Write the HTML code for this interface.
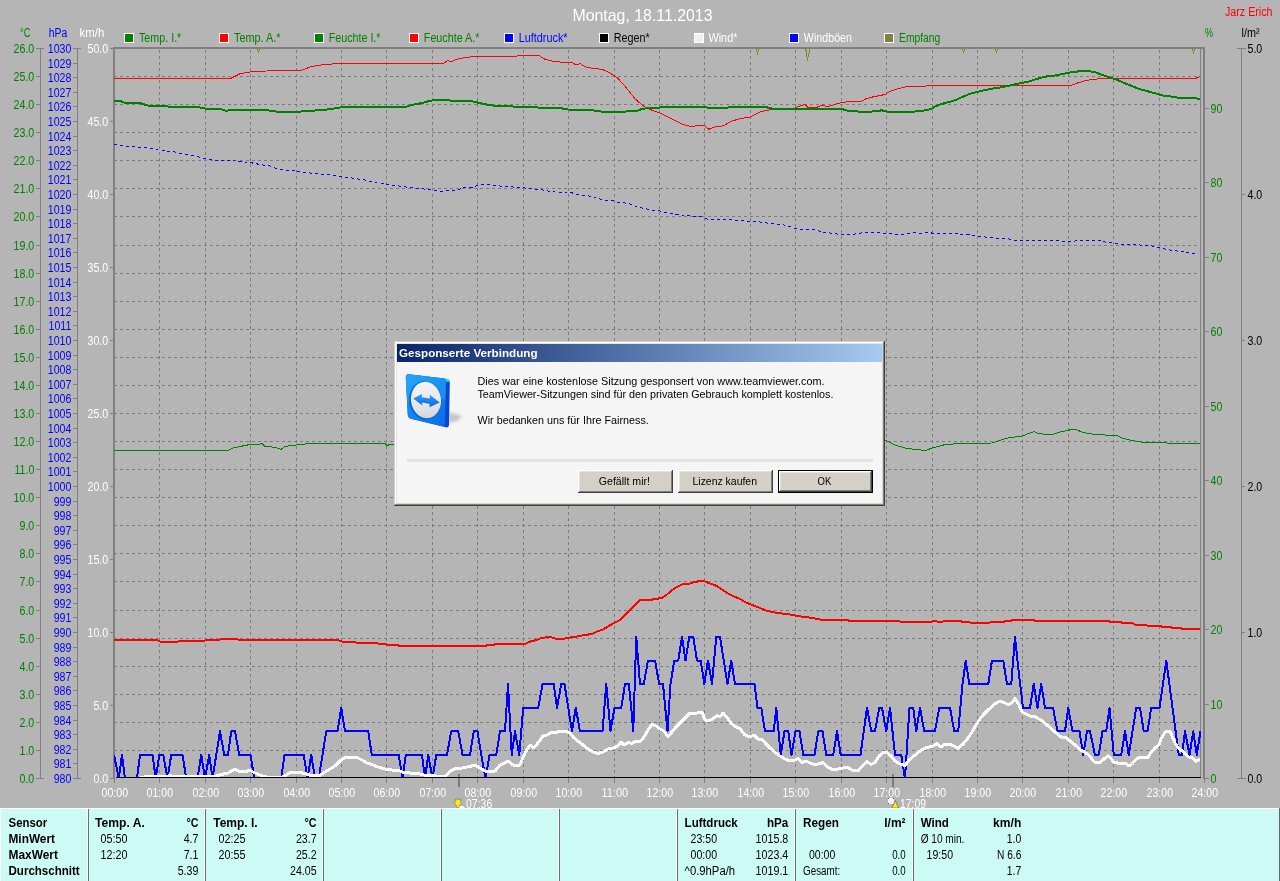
<!DOCTYPE html>
<html lang="de"><head><meta charset="utf-8"><title>Montag, 18.11.2013</title>
<style>
html,body{margin:0;padding:0;background:#b5b5b5;overflow:hidden}
svg{display:block;font-family:"Liberation Sans",sans-serif;will-change:transform}
</style></head><body>
<svg width="1280" height="881" viewBox="0 0 1280 881">
<defs><clipPath id="plotclip"><rect x="114" y="49" width="1087" height="728"/></clipPath></defs>
<rect x="0" y="0" width="1280" height="881" fill="#b5b5b5"/>
<text x="572.50" y="20.50" fill="#ffffff" font-size="16.5" textLength="140.00" lengthAdjust="spacingAndGlyphs">Montag, 18.11.2013</text>
<text x="1225.00" y="16.00" fill="#ff0000" font-size="12.5" textLength="47.50" lengthAdjust="spacingAndGlyphs">Jarz Erich</text>
<g shape-rendering="crispEdges">
<rect x="124" y="33" width="10" height="10" fill="#ffffff"/>
<rect x="125" y="34" width="8" height="8" fill="#008000"/>
<rect x="219" y="33" width="10" height="10" fill="#ffffff"/>
<rect x="220" y="34" width="8" height="8" fill="#ff0000"/>
<rect x="314" y="33" width="10" height="10" fill="#ffffff"/>
<rect x="315" y="34" width="8" height="8" fill="#008000"/>
<rect x="409" y="33" width="10" height="10" fill="#ffffff"/>
<rect x="410" y="34" width="8" height="8" fill="#ff0000"/>
<rect x="504" y="33" width="10" height="10" fill="#ffffff"/>
<rect x="505" y="34" width="8" height="8" fill="#0000ff"/>
<rect x="599" y="33" width="10" height="10" fill="#ffffff"/>
<rect x="600" y="34" width="8" height="8" fill="#000000"/>
<rect x="694" y="33" width="10" height="10" fill="#ffffff"/>
<rect x="695" y="34" width="8" height="8" fill="#f0f0f0"/>
<rect x="789" y="33" width="10" height="10" fill="#ffffff"/>
<rect x="790" y="34" width="8" height="8" fill="#0000ff"/>
<rect x="884" y="33" width="10" height="10" fill="#ffffff"/>
<rect x="885" y="34" width="8" height="8" fill="#808040"/>
</g>
<text x="139.00" y="42.00" fill="#008000" font-size="12.5" textLength="42.30" lengthAdjust="spacingAndGlyphs">Temp. I.*</text>
<text x="234.00" y="42.00" fill="#008000" font-size="12.5" textLength="46.50" lengthAdjust="spacingAndGlyphs">Temp. A.*</text>
<text x="328.80" y="42.00" fill="#008000" font-size="12.5" textLength="51.70" lengthAdjust="spacingAndGlyphs">Feuchte I.*</text>
<text x="423.80" y="42.00" fill="#008000" font-size="12.5" textLength="55.70" lengthAdjust="spacingAndGlyphs">Feuchte A.*</text>
<text x="518.80" y="42.00" fill="#0000ff" font-size="12.5" textLength="48.70" lengthAdjust="spacingAndGlyphs">Luftdruck*</text>
<text x="613.80" y="42.00" fill="#000000" font-size="12.5" textLength="35.90" lengthAdjust="spacingAndGlyphs">Regen*</text>
<text x="708.40" y="42.00" fill="#ffffff" font-size="12.5" textLength="29.10" lengthAdjust="spacingAndGlyphs">Wind*</text>
<text x="803.80" y="42.00" fill="#ffffff" font-size="12.5" textLength="48.20" lengthAdjust="spacingAndGlyphs">Windböen</text>
<text x="899.00" y="42.00" fill="#008000" font-size="12.5" textLength="41.30" lengthAdjust="spacingAndGlyphs">Empfang</text>
<g shape-rendering="crispEdges" fill="#808080">
<rect x="40" y="48" width="1" height="731" fill="#808080"/>
<rect x="36" y="778" width="8" height="1" fill="#808080"/>
<rect x="36" y="750" width="4" height="1" fill="#808080"/>
<rect x="36" y="722" width="4" height="1" fill="#808080"/>
<rect x="36" y="694" width="4" height="1" fill="#808080"/>
<rect x="36" y="666" width="4" height="1" fill="#808080"/>
<rect x="36" y="638" width="4" height="1" fill="#808080"/>
<rect x="36" y="610" width="4" height="1" fill="#808080"/>
<rect x="36" y="581" width="4" height="1" fill="#808080"/>
<rect x="36" y="553" width="4" height="1" fill="#808080"/>
<rect x="36" y="525" width="4" height="1" fill="#808080"/>
<rect x="36" y="497" width="4" height="1" fill="#808080"/>
<rect x="36" y="469" width="4" height="1" fill="#808080"/>
<rect x="36" y="441" width="4" height="1" fill="#808080"/>
<rect x="36" y="413" width="4" height="1" fill="#808080"/>
<rect x="36" y="385" width="4" height="1" fill="#808080"/>
<rect x="36" y="357" width="4" height="1" fill="#808080"/>
<rect x="36" y="329" width="4" height="1" fill="#808080"/>
<rect x="36" y="301" width="4" height="1" fill="#808080"/>
<rect x="36" y="273" width="4" height="1" fill="#808080"/>
<rect x="36" y="245" width="4" height="1" fill="#808080"/>
<rect x="36" y="216" width="4" height="1" fill="#808080"/>
<rect x="36" y="188" width="4" height="1" fill="#808080"/>
<rect x="36" y="160" width="4" height="1" fill="#808080"/>
<rect x="36" y="132" width="4" height="1" fill="#808080"/>
<rect x="36" y="104" width="4" height="1" fill="#808080"/>
<rect x="36" y="76" width="4" height="1" fill="#808080"/>
<rect x="36" y="48" width="8" height="1" fill="#808080"/>
<rect x="77" y="48" width="1" height="731" fill="#808080"/>
<rect x="73" y="778" width="8" height="1" fill="#808080"/>
<rect x="73" y="763" width="4" height="1" fill="#808080"/>
<rect x="73" y="749" width="4" height="1" fill="#808080"/>
<rect x="73" y="734" width="4" height="1" fill="#808080"/>
<rect x="73" y="720" width="4" height="1" fill="#808080"/>
<rect x="73" y="705" width="4" height="1" fill="#808080"/>
<rect x="73" y="690" width="4" height="1" fill="#808080"/>
<rect x="73" y="676" width="4" height="1" fill="#808080"/>
<rect x="73" y="661" width="4" height="1" fill="#808080"/>
<rect x="73" y="647" width="4" height="1" fill="#808080"/>
<rect x="73" y="632" width="4" height="1" fill="#808080"/>
<rect x="73" y="617" width="4" height="1" fill="#808080"/>
<rect x="73" y="603" width="4" height="1" fill="#808080"/>
<rect x="73" y="588" width="4" height="1" fill="#808080"/>
<rect x="73" y="574" width="4" height="1" fill="#808080"/>
<rect x="73" y="559" width="4" height="1" fill="#808080"/>
<rect x="73" y="544" width="4" height="1" fill="#808080"/>
<rect x="73" y="530" width="4" height="1" fill="#808080"/>
<rect x="73" y="515" width="4" height="1" fill="#808080"/>
<rect x="73" y="501" width="4" height="1" fill="#808080"/>
<rect x="73" y="486" width="4" height="1" fill="#808080"/>
<rect x="73" y="471" width="4" height="1" fill="#808080"/>
<rect x="73" y="457" width="4" height="1" fill="#808080"/>
<rect x="73" y="442" width="4" height="1" fill="#808080"/>
<rect x="73" y="428" width="4" height="1" fill="#808080"/>
<rect x="73" y="413" width="4" height="1" fill="#808080"/>
<rect x="73" y="398" width="4" height="1" fill="#808080"/>
<rect x="73" y="384" width="4" height="1" fill="#808080"/>
<rect x="73" y="369" width="4" height="1" fill="#808080"/>
<rect x="73" y="355" width="4" height="1" fill="#808080"/>
<rect x="73" y="340" width="4" height="1" fill="#808080"/>
<rect x="73" y="325" width="4" height="1" fill="#808080"/>
<rect x="73" y="311" width="4" height="1" fill="#808080"/>
<rect x="73" y="296" width="4" height="1" fill="#808080"/>
<rect x="73" y="282" width="4" height="1" fill="#808080"/>
<rect x="73" y="267" width="4" height="1" fill="#808080"/>
<rect x="73" y="252" width="4" height="1" fill="#808080"/>
<rect x="73" y="238" width="4" height="1" fill="#808080"/>
<rect x="73" y="223" width="4" height="1" fill="#808080"/>
<rect x="73" y="209" width="4" height="1" fill="#808080"/>
<rect x="73" y="194" width="4" height="1" fill="#808080"/>
<rect x="73" y="179" width="4" height="1" fill="#808080"/>
<rect x="73" y="165" width="4" height="1" fill="#808080"/>
<rect x="73" y="150" width="4" height="1" fill="#808080"/>
<rect x="73" y="136" width="4" height="1" fill="#808080"/>
<rect x="73" y="121" width="4" height="1" fill="#808080"/>
<rect x="73" y="106" width="4" height="1" fill="#808080"/>
<rect x="73" y="92" width="4" height="1" fill="#808080"/>
<rect x="73" y="77" width="4" height="1" fill="#808080"/>
<rect x="73" y="63" width="4" height="1" fill="#808080"/>
<rect x="73" y="48" width="8" height="1" fill="#808080"/>
<rect x="110" y="778" width="4" height="1" fill="#808080"/>
<rect x="110" y="705" width="4" height="1" fill="#808080"/>
<rect x="110" y="632" width="4" height="1" fill="#808080"/>
<rect x="110" y="559" width="4" height="1" fill="#808080"/>
<rect x="110" y="486" width="4" height="1" fill="#808080"/>
<rect x="110" y="413" width="4" height="1" fill="#808080"/>
<rect x="110" y="340" width="4" height="1" fill="#808080"/>
<rect x="110" y="267" width="4" height="1" fill="#808080"/>
<rect x="110" y="194" width="4" height="1" fill="#808080"/>
<rect x="110" y="121" width="4" height="1" fill="#808080"/>
<rect x="110" y="48" width="4" height="1" fill="#808080"/>
<rect x="1205" y="778" width="4" height="1" fill="#808080"/>
<rect x="1205" y="704" width="4" height="1" fill="#808080"/>
<rect x="1205" y="629" width="4" height="1" fill="#808080"/>
<rect x="1205" y="555" width="4" height="1" fill="#808080"/>
<rect x="1205" y="480" width="4" height="1" fill="#808080"/>
<rect x="1205" y="406" width="4" height="1" fill="#808080"/>
<rect x="1205" y="331" width="4" height="1" fill="#808080"/>
<rect x="1205" y="257" width="4" height="1" fill="#808080"/>
<rect x="1205" y="182" width="4" height="1" fill="#808080"/>
<rect x="1205" y="108" width="4" height="1" fill="#808080"/>
<rect x="1241" y="48" width="1" height="731" fill="#808080"/>
<rect x="1237" y="778" width="9" height="1" fill="#808080"/>
<rect x="1241" y="632" width="4" height="1" fill="#808080"/>
<rect x="1241" y="486" width="4" height="1" fill="#808080"/>
<rect x="1241" y="340" width="4" height="1" fill="#808080"/>
<rect x="1241" y="194" width="4" height="1" fill="#808080"/>
<rect x="1237" y="48" width="9" height="1" fill="#808080"/>
</g>
<text x="20.00" y="37.00" fill="#008000" font-size="12.5" textLength="10.50" lengthAdjust="spacingAndGlyphs">°C</text>
<text x="48.80" y="37.00" fill="#0000ff" font-size="12.5" textLength="18.50" lengthAdjust="spacingAndGlyphs">hPa</text>
<text x="79.50" y="37.00" fill="#ffffff" font-size="12.5" textLength="24.80" lengthAdjust="spacingAndGlyphs">km/h</text>
<text x="1205.00" y="37.00" fill="#008000" font-size="12.5" textLength="8.00" lengthAdjust="spacingAndGlyphs">%</text>
<text x="1241.50" y="37.00" fill="#000000" font-size="12.5" textLength="18.00" lengthAdjust="spacingAndGlyphs">l/m²</text>
<text x="19.53" y="783.00" fill="#008000" font-size="12.5" textLength="14.77" lengthAdjust="spacingAndGlyphs">0.0</text>
<text x="19.53" y="755.00" fill="#008000" font-size="12.5" textLength="14.77" lengthAdjust="spacingAndGlyphs">1.0</text>
<text x="19.53" y="727.00" fill="#008000" font-size="12.5" textLength="14.77" lengthAdjust="spacingAndGlyphs">2.0</text>
<text x="19.53" y="699.00" fill="#008000" font-size="12.5" textLength="14.77" lengthAdjust="spacingAndGlyphs">3.0</text>
<text x="19.53" y="671.00" fill="#008000" font-size="12.5" textLength="14.77" lengthAdjust="spacingAndGlyphs">4.0</text>
<text x="19.53" y="643.00" fill="#008000" font-size="12.5" textLength="14.77" lengthAdjust="spacingAndGlyphs">5.0</text>
<text x="19.53" y="615.00" fill="#008000" font-size="12.5" textLength="14.77" lengthAdjust="spacingAndGlyphs">6.0</text>
<text x="19.53" y="586.00" fill="#008000" font-size="12.5" textLength="14.77" lengthAdjust="spacingAndGlyphs">7.0</text>
<text x="19.53" y="558.00" fill="#008000" font-size="12.5" textLength="14.77" lengthAdjust="spacingAndGlyphs">8.0</text>
<text x="19.53" y="530.00" fill="#008000" font-size="12.5" textLength="14.77" lengthAdjust="spacingAndGlyphs">9.0</text>
<text x="13.62" y="502.00" fill="#008000" font-size="12.5" textLength="20.68" lengthAdjust="spacingAndGlyphs">10.0</text>
<text x="14.41" y="474.00" fill="#008000" font-size="12.5" textLength="19.89" lengthAdjust="spacingAndGlyphs">11.0</text>
<text x="13.62" y="446.00" fill="#008000" font-size="12.5" textLength="20.68" lengthAdjust="spacingAndGlyphs">12.0</text>
<text x="13.62" y="418.00" fill="#008000" font-size="12.5" textLength="20.68" lengthAdjust="spacingAndGlyphs">13.0</text>
<text x="13.62" y="390.00" fill="#008000" font-size="12.5" textLength="20.68" lengthAdjust="spacingAndGlyphs">14.0</text>
<text x="13.62" y="362.00" fill="#008000" font-size="12.5" textLength="20.68" lengthAdjust="spacingAndGlyphs">15.0</text>
<text x="13.62" y="334.00" fill="#008000" font-size="12.5" textLength="20.68" lengthAdjust="spacingAndGlyphs">16.0</text>
<text x="13.62" y="306.00" fill="#008000" font-size="12.5" textLength="20.68" lengthAdjust="spacingAndGlyphs">17.0</text>
<text x="13.62" y="278.00" fill="#008000" font-size="12.5" textLength="20.68" lengthAdjust="spacingAndGlyphs">18.0</text>
<text x="13.62" y="250.00" fill="#008000" font-size="12.5" textLength="20.68" lengthAdjust="spacingAndGlyphs">19.0</text>
<text x="13.62" y="221.00" fill="#008000" font-size="12.5" textLength="20.68" lengthAdjust="spacingAndGlyphs">20.0</text>
<text x="13.62" y="193.00" fill="#008000" font-size="12.5" textLength="20.68" lengthAdjust="spacingAndGlyphs">21.0</text>
<text x="13.62" y="165.00" fill="#008000" font-size="12.5" textLength="20.68" lengthAdjust="spacingAndGlyphs">22.0</text>
<text x="13.62" y="137.00" fill="#008000" font-size="12.5" textLength="20.68" lengthAdjust="spacingAndGlyphs">23.0</text>
<text x="13.62" y="109.00" fill="#008000" font-size="12.5" textLength="20.68" lengthAdjust="spacingAndGlyphs">24.0</text>
<text x="13.62" y="81.00" fill="#008000" font-size="12.5" textLength="20.68" lengthAdjust="spacingAndGlyphs">25.0</text>
<text x="13.62" y="53.00" fill="#008000" font-size="12.5" textLength="20.68" lengthAdjust="spacingAndGlyphs">26.0</text>
<text x="53.67" y="783.00" fill="#0000ff" font-size="12.5" textLength="17.73" lengthAdjust="spacingAndGlyphs">980</text>
<text x="53.67" y="768.00" fill="#0000ff" font-size="12.5" textLength="17.73" lengthAdjust="spacingAndGlyphs">981</text>
<text x="53.67" y="754.00" fill="#0000ff" font-size="12.5" textLength="17.73" lengthAdjust="spacingAndGlyphs">982</text>
<text x="53.67" y="739.00" fill="#0000ff" font-size="12.5" textLength="17.73" lengthAdjust="spacingAndGlyphs">983</text>
<text x="53.67" y="725.00" fill="#0000ff" font-size="12.5" textLength="17.73" lengthAdjust="spacingAndGlyphs">984</text>
<text x="53.67" y="710.00" fill="#0000ff" font-size="12.5" textLength="17.73" lengthAdjust="spacingAndGlyphs">985</text>
<text x="53.67" y="695.00" fill="#0000ff" font-size="12.5" textLength="17.73" lengthAdjust="spacingAndGlyphs">986</text>
<text x="53.67" y="681.00" fill="#0000ff" font-size="12.5" textLength="17.73" lengthAdjust="spacingAndGlyphs">987</text>
<text x="53.67" y="666.00" fill="#0000ff" font-size="12.5" textLength="17.73" lengthAdjust="spacingAndGlyphs">988</text>
<text x="53.67" y="652.00" fill="#0000ff" font-size="12.5" textLength="17.73" lengthAdjust="spacingAndGlyphs">989</text>
<text x="53.67" y="637.00" fill="#0000ff" font-size="12.5" textLength="17.73" lengthAdjust="spacingAndGlyphs">990</text>
<text x="53.67" y="622.00" fill="#0000ff" font-size="12.5" textLength="17.73" lengthAdjust="spacingAndGlyphs">991</text>
<text x="53.67" y="608.00" fill="#0000ff" font-size="12.5" textLength="17.73" lengthAdjust="spacingAndGlyphs">992</text>
<text x="53.67" y="593.00" fill="#0000ff" font-size="12.5" textLength="17.73" lengthAdjust="spacingAndGlyphs">993</text>
<text x="53.67" y="579.00" fill="#0000ff" font-size="12.5" textLength="17.73" lengthAdjust="spacingAndGlyphs">994</text>
<text x="53.67" y="564.00" fill="#0000ff" font-size="12.5" textLength="17.73" lengthAdjust="spacingAndGlyphs">995</text>
<text x="53.67" y="549.00" fill="#0000ff" font-size="12.5" textLength="17.73" lengthAdjust="spacingAndGlyphs">996</text>
<text x="53.67" y="535.00" fill="#0000ff" font-size="12.5" textLength="17.73" lengthAdjust="spacingAndGlyphs">997</text>
<text x="53.67" y="520.00" fill="#0000ff" font-size="12.5" textLength="17.73" lengthAdjust="spacingAndGlyphs">998</text>
<text x="53.67" y="506.00" fill="#0000ff" font-size="12.5" textLength="17.73" lengthAdjust="spacingAndGlyphs">999</text>
<text x="47.77" y="491.00" fill="#0000ff" font-size="12.5" textLength="23.63" lengthAdjust="spacingAndGlyphs">1000</text>
<text x="47.77" y="476.00" fill="#0000ff" font-size="12.5" textLength="23.63" lengthAdjust="spacingAndGlyphs">1001</text>
<text x="47.77" y="462.00" fill="#0000ff" font-size="12.5" textLength="23.63" lengthAdjust="spacingAndGlyphs">1002</text>
<text x="47.77" y="447.00" fill="#0000ff" font-size="12.5" textLength="23.63" lengthAdjust="spacingAndGlyphs">1003</text>
<text x="47.77" y="433.00" fill="#0000ff" font-size="12.5" textLength="23.63" lengthAdjust="spacingAndGlyphs">1004</text>
<text x="47.77" y="418.00" fill="#0000ff" font-size="12.5" textLength="23.63" lengthAdjust="spacingAndGlyphs">1005</text>
<text x="47.77" y="403.00" fill="#0000ff" font-size="12.5" textLength="23.63" lengthAdjust="spacingAndGlyphs">1006</text>
<text x="47.77" y="389.00" fill="#0000ff" font-size="12.5" textLength="23.63" lengthAdjust="spacingAndGlyphs">1007</text>
<text x="47.77" y="374.00" fill="#0000ff" font-size="12.5" textLength="23.63" lengthAdjust="spacingAndGlyphs">1008</text>
<text x="47.77" y="360.00" fill="#0000ff" font-size="12.5" textLength="23.63" lengthAdjust="spacingAndGlyphs">1009</text>
<text x="47.77" y="345.00" fill="#0000ff" font-size="12.5" textLength="23.63" lengthAdjust="spacingAndGlyphs">1010</text>
<text x="48.55" y="330.00" fill="#0000ff" font-size="12.5" textLength="22.85" lengthAdjust="spacingAndGlyphs">1011</text>
<text x="47.77" y="316.00" fill="#0000ff" font-size="12.5" textLength="23.63" lengthAdjust="spacingAndGlyphs">1012</text>
<text x="47.77" y="301.00" fill="#0000ff" font-size="12.5" textLength="23.63" lengthAdjust="spacingAndGlyphs">1013</text>
<text x="47.77" y="287.00" fill="#0000ff" font-size="12.5" textLength="23.63" lengthAdjust="spacingAndGlyphs">1014</text>
<text x="47.77" y="272.00" fill="#0000ff" font-size="12.5" textLength="23.63" lengthAdjust="spacingAndGlyphs">1015</text>
<text x="47.77" y="257.00" fill="#0000ff" font-size="12.5" textLength="23.63" lengthAdjust="spacingAndGlyphs">1016</text>
<text x="47.77" y="243.00" fill="#0000ff" font-size="12.5" textLength="23.63" lengthAdjust="spacingAndGlyphs">1017</text>
<text x="47.77" y="228.00" fill="#0000ff" font-size="12.5" textLength="23.63" lengthAdjust="spacingAndGlyphs">1018</text>
<text x="47.77" y="214.00" fill="#0000ff" font-size="12.5" textLength="23.63" lengthAdjust="spacingAndGlyphs">1019</text>
<text x="47.77" y="199.00" fill="#0000ff" font-size="12.5" textLength="23.63" lengthAdjust="spacingAndGlyphs">1020</text>
<text x="47.77" y="184.00" fill="#0000ff" font-size="12.5" textLength="23.63" lengthAdjust="spacingAndGlyphs">1021</text>
<text x="47.77" y="170.00" fill="#0000ff" font-size="12.5" textLength="23.63" lengthAdjust="spacingAndGlyphs">1022</text>
<text x="47.77" y="155.00" fill="#0000ff" font-size="12.5" textLength="23.63" lengthAdjust="spacingAndGlyphs">1023</text>
<text x="47.77" y="141.00" fill="#0000ff" font-size="12.5" textLength="23.63" lengthAdjust="spacingAndGlyphs">1024</text>
<text x="47.77" y="126.00" fill="#0000ff" font-size="12.5" textLength="23.63" lengthAdjust="spacingAndGlyphs">1025</text>
<text x="47.77" y="111.00" fill="#0000ff" font-size="12.5" textLength="23.63" lengthAdjust="spacingAndGlyphs">1026</text>
<text x="47.77" y="97.00" fill="#0000ff" font-size="12.5" textLength="23.63" lengthAdjust="spacingAndGlyphs">1027</text>
<text x="47.77" y="82.00" fill="#0000ff" font-size="12.5" textLength="23.63" lengthAdjust="spacingAndGlyphs">1028</text>
<text x="47.77" y="68.00" fill="#0000ff" font-size="12.5" textLength="23.63" lengthAdjust="spacingAndGlyphs">1029</text>
<text x="47.77" y="53.00" fill="#0000ff" font-size="12.5" textLength="23.63" lengthAdjust="spacingAndGlyphs">1030</text>
<text x="93.43" y="783.00" fill="#ffffff" font-size="12.5" textLength="14.77" lengthAdjust="spacingAndGlyphs">0.0</text>
<text x="93.43" y="710.00" fill="#ffffff" font-size="12.5" textLength="14.77" lengthAdjust="spacingAndGlyphs">5.0</text>
<text x="87.52" y="637.00" fill="#ffffff" font-size="12.5" textLength="20.68" lengthAdjust="spacingAndGlyphs">10.0</text>
<text x="87.52" y="564.00" fill="#ffffff" font-size="12.5" textLength="20.68" lengthAdjust="spacingAndGlyphs">15.0</text>
<text x="87.52" y="491.00" fill="#ffffff" font-size="12.5" textLength="20.68" lengthAdjust="spacingAndGlyphs">20.0</text>
<text x="87.52" y="418.00" fill="#ffffff" font-size="12.5" textLength="20.68" lengthAdjust="spacingAndGlyphs">25.0</text>
<text x="87.52" y="345.00" fill="#ffffff" font-size="12.5" textLength="20.68" lengthAdjust="spacingAndGlyphs">30.0</text>
<text x="87.52" y="272.00" fill="#ffffff" font-size="12.5" textLength="20.68" lengthAdjust="spacingAndGlyphs">35.0</text>
<text x="87.52" y="199.00" fill="#ffffff" font-size="12.5" textLength="20.68" lengthAdjust="spacingAndGlyphs">40.0</text>
<text x="87.52" y="126.00" fill="#ffffff" font-size="12.5" textLength="20.68" lengthAdjust="spacingAndGlyphs">45.0</text>
<text x="87.52" y="53.00" fill="#ffffff" font-size="12.5" textLength="20.68" lengthAdjust="spacingAndGlyphs">50.0</text>
<text x="1210.50" y="783.00" fill="#008000" font-size="12.5" textLength="5.91" lengthAdjust="spacingAndGlyphs">0</text>
<text x="1210.50" y="709.00" fill="#008000" font-size="12.5" textLength="11.82" lengthAdjust="spacingAndGlyphs">10</text>
<text x="1210.50" y="634.00" fill="#008000" font-size="12.5" textLength="11.82" lengthAdjust="spacingAndGlyphs">20</text>
<text x="1210.50" y="560.00" fill="#008000" font-size="12.5" textLength="11.82" lengthAdjust="spacingAndGlyphs">30</text>
<text x="1210.50" y="485.00" fill="#008000" font-size="12.5" textLength="11.82" lengthAdjust="spacingAndGlyphs">40</text>
<text x="1210.50" y="411.00" fill="#008000" font-size="12.5" textLength="11.82" lengthAdjust="spacingAndGlyphs">50</text>
<text x="1210.50" y="336.00" fill="#008000" font-size="12.5" textLength="11.82" lengthAdjust="spacingAndGlyphs">60</text>
<text x="1210.50" y="262.00" fill="#008000" font-size="12.5" textLength="11.82" lengthAdjust="spacingAndGlyphs">70</text>
<text x="1210.50" y="187.00" fill="#008000" font-size="12.5" textLength="11.82" lengthAdjust="spacingAndGlyphs">80</text>
<text x="1210.50" y="113.00" fill="#008000" font-size="12.5" textLength="11.82" lengthAdjust="spacingAndGlyphs">90</text>
<text x="1247.50" y="783.00" fill="#000000" font-size="12.5" textLength="14.77" lengthAdjust="spacingAndGlyphs">0.0</text>
<text x="1247.50" y="637.00" fill="#000000" font-size="12.5" textLength="14.77" lengthAdjust="spacingAndGlyphs">1.0</text>
<text x="1247.50" y="491.00" fill="#000000" font-size="12.5" textLength="14.77" lengthAdjust="spacingAndGlyphs">2.0</text>
<text x="1247.50" y="345.00" fill="#000000" font-size="12.5" textLength="14.77" lengthAdjust="spacingAndGlyphs">3.0</text>
<text x="1247.50" y="199.00" fill="#000000" font-size="12.5" textLength="14.77" lengthAdjust="spacingAndGlyphs">4.0</text>
<text x="1247.50" y="53.00" fill="#000000" font-size="12.5" textLength="14.77" lengthAdjust="spacingAndGlyphs">5.0</text>
<g shape-rendering="crispEdges" stroke="#7c7c7c" stroke-width="1" stroke-dasharray="3 3">
<line x1="159.5" y1="50" x2="159.5" y2="777" />
<line x1="205.5" y1="50" x2="205.5" y2="777" />
<line x1="250.5" y1="50" x2="250.5" y2="777" />
<line x1="296.5" y1="50" x2="296.5" y2="777" />
<line x1="341.5" y1="50" x2="341.5" y2="777" />
<line x1="386.5" y1="50" x2="386.5" y2="777" />
<line x1="432.5" y1="50" x2="432.5" y2="777" />
<line x1="477.5" y1="50" x2="477.5" y2="777" />
<line x1="523.5" y1="50" x2="523.5" y2="777" />
<line x1="568.5" y1="50" x2="568.5" y2="777" />
<line x1="614.5" y1="50" x2="614.5" y2="777" />
<line x1="659.5" y1="50" x2="659.5" y2="777" />
<line x1="704.5" y1="50" x2="704.5" y2="777" />
<line x1="750.5" y1="50" x2="750.5" y2="777" />
<line x1="795.5" y1="50" x2="795.5" y2="777" />
<line x1="841.5" y1="50" x2="841.5" y2="777" />
<line x1="886.5" y1="50" x2="886.5" y2="777" />
<line x1="932.5" y1="50" x2="932.5" y2="777" />
<line x1="977.5" y1="50" x2="977.5" y2="777" />
<line x1="1022.5" y1="50" x2="1022.5" y2="777" />
<line x1="1068.5" y1="50" x2="1068.5" y2="777" />
<line x1="1113.5" y1="50" x2="1113.5" y2="777" />
<line x1="1159.5" y1="50" x2="1159.5" y2="777" />
<line x1="114" y1="750.5" x2="1200" y2="750.5" />
<line x1="114" y1="722.5" x2="1200" y2="722.5" />
<line x1="114" y1="694.5" x2="1200" y2="694.5" />
<line x1="114" y1="666.5" x2="1200" y2="666.5" />
<line x1="114" y1="638.5" x2="1200" y2="638.5" />
<line x1="114" y1="610.5" x2="1200" y2="610.5" />
<line x1="114" y1="581.5" x2="1200" y2="581.5" />
<line x1="114" y1="553.5" x2="1200" y2="553.5" />
<line x1="114" y1="525.5" x2="1200" y2="525.5" />
<line x1="114" y1="497.5" x2="1200" y2="497.5" />
<line x1="114" y1="469.5" x2="1200" y2="469.5" />
<line x1="114" y1="441.5" x2="1200" y2="441.5" />
<line x1="114" y1="413.5" x2="1200" y2="413.5" />
<line x1="114" y1="385.5" x2="1200" y2="385.5" />
<line x1="114" y1="357.5" x2="1200" y2="357.5" />
<line x1="114" y1="329.5" x2="1200" y2="329.5" />
<line x1="114" y1="301.5" x2="1200" y2="301.5" />
<line x1="114" y1="273.5" x2="1200" y2="273.5" />
<line x1="114" y1="245.5" x2="1200" y2="245.5" />
<line x1="114" y1="216.5" x2="1200" y2="216.5" />
<line x1="114" y1="188.5" x2="1200" y2="188.5" />
<line x1="114" y1="160.5" x2="1200" y2="160.5" />
<line x1="114" y1="132.5" x2="1200" y2="132.5" />
<line x1="114" y1="104.5" x2="1200" y2="104.5" />
<line x1="114" y1="76.5" x2="1200" y2="76.5" />
</g>
<g shape-rendering="crispEdges">
<rect x="114" y="778" width="1" height="5" fill="#808080"/>
<rect x="159" y="778" width="1" height="5" fill="#808080"/>
<rect x="205" y="778" width="1" height="5" fill="#808080"/>
<rect x="250" y="778" width="1" height="5" fill="#808080"/>
<rect x="296" y="778" width="1" height="5" fill="#808080"/>
<rect x="341" y="778" width="1" height="5" fill="#808080"/>
<rect x="386" y="778" width="1" height="5" fill="#808080"/>
<rect x="432" y="778" width="1" height="5" fill="#808080"/>
<rect x="477" y="778" width="1" height="5" fill="#808080"/>
<rect x="523" y="778" width="1" height="5" fill="#808080"/>
<rect x="568" y="778" width="1" height="5" fill="#808080"/>
<rect x="614" y="778" width="1" height="5" fill="#808080"/>
<rect x="659" y="778" width="1" height="5" fill="#808080"/>
<rect x="704" y="778" width="1" height="5" fill="#808080"/>
<rect x="750" y="778" width="1" height="5" fill="#808080"/>
<rect x="795" y="778" width="1" height="5" fill="#808080"/>
<rect x="841" y="778" width="1" height="5" fill="#808080"/>
<rect x="886" y="778" width="1" height="5" fill="#808080"/>
<rect x="932" y="778" width="1" height="5" fill="#808080"/>
<rect x="977" y="778" width="1" height="5" fill="#808080"/>
<rect x="1022" y="778" width="1" height="5" fill="#808080"/>
<rect x="1068" y="778" width="1" height="5" fill="#808080"/>
<rect x="1113" y="778" width="1" height="5" fill="#808080"/>
<rect x="1159" y="778" width="1" height="5" fill="#808080"/>
<rect x="1204" y="778" width="1" height="5" fill="#808080"/>
</g>
<g shape-rendering="crispEdges" stroke-linejoin="round">
<rect x="113" y="47" width="1092" height="2" fill="#808080"/>
<rect x="113" y="47" width="2" height="732" fill="#808080"/>
<rect x="1203" y="47" width="2" height="732" fill="#808080"/>
<rect x="1200" y="49" width="1" height="729" fill="#808080"/>
<rect x="257" y="48" width="1" height="3" fill="#86822c"/>
<rect x="260" y="48" width="1" height="1" fill="#86822c"/>
<rect x="259" y="49" width="1" height="2" fill="#86822c"/>
<rect x="258" y="51" width="1" height="2" fill="#86822c"/>
<rect x="756" y="48" width="1" height="3" fill="#86822c"/>
<rect x="759" y="48" width="1" height="1" fill="#86822c"/>
<rect x="758" y="49" width="1" height="2" fill="#86822c"/>
<rect x="757" y="51" width="1" height="4" fill="#86822c"/>
<rect x="962" y="48" width="1" height="3" fill="#86822c"/>
<rect x="965" y="48" width="1" height="1" fill="#86822c"/>
<rect x="964" y="49" width="1" height="2" fill="#86822c"/>
<rect x="963" y="51" width="1" height="2" fill="#86822c"/>
<rect x="995" y="48" width="1" height="3" fill="#86822c"/>
<rect x="998" y="48" width="1" height="1" fill="#86822c"/>
<rect x="997" y="49" width="1" height="2" fill="#86822c"/>
<rect x="996" y="51" width="1" height="2" fill="#86822c"/>
<rect x="1192" y="48" width="1" height="3" fill="#86822c"/>
<rect x="1195" y="48" width="1" height="1" fill="#86822c"/>
<rect x="1194" y="49" width="1" height="2" fill="#86822c"/>
<rect x="1193" y="51" width="1" height="3" fill="#86822c"/>
<rect x="805" y="48" width="1" height="3" fill="#86822c"/>
<rect x="806" y="50" width="1" height="7" fill="#86822c"/>
<rect x="809" y="48" width="1" height="5" fill="#86822c"/>
<rect x="808" y="53" width="1" height="4" fill="#86822c"/>
<rect x="807" y="57" width="1" height="4" fill="#86822c"/>
<polyline points="114.00,144.50 125.00,146.00 150.00,148.00 160.00,150.50 175.00,152.00 182.00,154.00 195.00,156.00 205.00,158.50 215.00,160.00 225.00,160.00 240.00,161.50 250.00,162.50 260.00,164.50 270.00,166.00 275.00,168.00 285.00,170.00 295.00,171.00 305.00,172.50 315.00,173.50 330.00,175.00 342.00,176.50 355.00,178.50 365.00,180.00 372.00,182.00 380.00,183.50 395.00,185.50 410.00,187.50 420.00,188.75 432.00,189.50 440.00,191.50 450.00,190.50 457.00,190.00 463.00,188.00 470.00,187.50 475.00,186.50 480.00,184.50 487.00,184.50 495.00,185.50 505.00,186.50 520.00,187.50 530.00,188.50 540.00,189.50 548.00,191.00 555.00,192.00 565.00,193.00 570.00,192.00 575.00,194.00 585.00,195.50 592.00,196.50 597.00,198.50 605.00,200.00 612.00,200.50 617.00,202.00 625.00,203.00 632.00,204.50 637.00,207.00 645.00,208.50 652.00,210.00 660.00,211.00 667.00,213.00 675.00,214.00 685.00,215.50 695.00,216.50 703.00,217.00 707.00,219.00 720.00,219.50 732.00,220.00 745.00,221.00 760.00,222.00 770.00,223.50 782.00,224.50 790.00,226.50 795.00,228.50 800.00,229.50 815.00,229.50 820.00,231.50 830.00,233.00 840.00,234.50 850.00,235.00 857.00,233.50 865.00,232.50 880.00,233.00 890.00,233.50 900.00,234.50 910.00,233.50 915.00,232.50 920.00,233.50 930.00,232.50 933.00,233.50 955.00,233.50 965.00,234.50 975.00,235.50 985.00,237.00 995.00,238.00 1008.00,238.50 1013.00,240.50 1040.00,240.50 1060.00,241.00 1068.00,242.00 1075.00,241.00 1085.00,240.50 1100.00,240.00 1105.00,242.00 1115.00,243.50 1125.00,244.50 1140.00,245.00 1150.00,245.50 1155.00,247.00 1162.00,248.50 1170.00,250.00 1180.00,251.50 1187.00,252.50 1197.00,253.50" fill="none" stroke="#0000ff" stroke-width="1" stroke-dasharray="3 3"/>
<polyline points="114.00,78.25 231.00,78.25 240.00,73.75 250.00,72.00 257.50,71.25 285.00,70.50 302.50,70.00 310.00,67.00 317.50,65.50 325.00,64.50 340.00,63.50 443.75,63.25 447.50,60.50 451.00,62.00 456.00,59.50 465.00,57.50 477.50,56.25 516.00,56.25 520.00,55.25 538.75,55.25 543.75,58.75 550.00,60.75 560.00,62.00 572.50,62.50 576.00,65.00 580.00,63.50 585.00,66.75 592.50,68.25 602.50,69.50 610.00,73.00 617.50,78.00 625.00,86.25 635.00,98.75 642.50,105.50 650.00,109.50 660.00,113.00 670.00,118.00 682.50,124.25 692.50,127.00 696.00,125.50 703.75,125.00 708.75,129.25 715.00,127.00 723.75,125.75 731.00,121.25 740.00,118.75 750.00,117.00 760.00,112.00 771.00,109.50 795.00,108.00 801.00,105.50 805.00,104.50 807.50,107.00 817.50,107.00 822.50,105.00 826.00,106.50 830.00,106.00 834.00,104.50 842.50,102.50 850.00,101.50 862.50,101.00 866.00,98.75 872.50,97.00 885.00,94.50 890.00,91.25 897.50,88.75 905.00,87.00 915.00,86.50 937.50,85.50 1071.00,85.50 1077.50,83.00 1085.00,80.75 1092.50,79.50 1105.00,78.25 1196.00,78.25 1200.00,76.50" fill="none" stroke="#ff0000" stroke-width="1" />
<polyline points="114.00,101.25 121.00,101.25 125.00,103.00 140.00,103.00 147.50,105.50 167.50,106.50 197.50,107.00 205.00,108.50 220.00,109.00 226.00,110.75 232.50,110.00 265.00,110.00 277.50,111.75 297.50,111.75 315.00,110.50 330.00,109.25 340.00,107.50 355.00,107.00 405.00,107.00 414.00,104.50 422.50,103.00 430.00,100.75 437.50,100.00 445.00,100.00 452.50,100.75 470.00,100.75 477.50,102.50 485.00,104.25 492.50,105.50 510.00,106.00 515.00,106.75 535.00,107.00 542.50,108.25 562.50,108.50 567.50,109.50 590.00,109.75 595.00,110.75 602.50,111.75 625.00,111.75 628.75,110.75 637.50,110.75 642.50,108.75 650.00,108.00 660.00,107.50 665.00,107.00 703.75,107.00 712.50,108.25 722.50,108.25 732.50,107.00 765.00,106.75 770.00,108.25 775.00,109.00 842.50,109.25 847.50,110.75 855.00,111.00 860.00,111.75 870.00,111.75 875.00,111.00 880.00,110.75 881.75,110.00 883.75,111.25 890.00,111.75 912.50,111.75 920.00,111.00 927.50,110.00 932.50,108.25 936.00,106.00 942.50,103.75 950.00,101.75 957.50,99.25 960.00,98.00 970.00,93.75 980.00,91.25 990.00,89.00 1000.00,87.50 1010.00,85.50 1020.00,83.25 1030.00,81.25 1040.00,78.00 1047.50,76.25 1055.00,75.50 1062.50,74.00 1070.00,72.50 1077.50,71.50 1082.50,71.00 1090.00,71.25 1096.00,72.50 1102.50,75.00 1110.00,77.50 1117.50,80.00 1125.00,83.25 1132.50,86.25 1140.00,89.25 1147.50,91.25 1155.00,93.25 1162.50,95.50 1172.50,96.75 1180.00,98.00 1195.00,98.25 1200.00,99.00" fill="none" stroke="#008000" stroke-width="2" />
<polyline points="114.00,450.50 228.00,450.50 233.00,448.00 240.00,446.50 250.00,444.50 260.00,444.00 262.00,443.50 265.00,446.50 272.00,447.00 277.00,448.00 281.00,449.50 285.00,446.50 292.00,445.50 300.00,444.50 310.00,443.50 385.00,443.50 387.00,445.50 390.00,444.50 396.00,444.50 420.00,444.50 500.00,444.00 600.00,443.00 700.00,441.00 800.00,440.00 870.00,439.00 884.00,439.50 895.00,445.00 905.00,448.00 915.00,449.50 926.00,450.50 932.00,448.00 945.00,444.60 960.00,443.50 992.00,443.00 1000.00,440.50 1005.00,438.50 1015.00,437.00 1022.00,436.00 1030.00,433.00 1034.00,431.50 1038.00,433.50 1047.00,434.50 1053.00,434.50 1058.00,432.50 1067.00,430.50 1072.00,429.50 1076.00,429.50 1082.00,432.00 1088.00,433.50 1095.00,434.50 1105.00,435.00 1117.00,435.50 1122.00,438.00 1128.00,439.50 1135.00,441.00 1143.00,442.30 1165.00,442.50 1167.00,443.00 1200.00,443.00" fill="none" stroke="#008000" stroke-width="1" />
<polyline points="114.00,640.00 157.00,640.00 160.00,641.50 178.00,641.50 181.00,640.50 205.00,640.50 210.00,639.50 220.00,639.50 223.00,638.50 235.00,638.50 238.00,639.50 247.00,639.50 250.00,640.00 337.00,640.00 342.00,641.50 352.00,641.50 356.00,642.50 375.00,642.50 378.00,643.50 385.00,643.50 388.00,645.00 397.00,645.00 400.00,646.00 485.00,646.00 488.00,645.00 493.00,645.00 496.00,644.00 525.00,644.00 528.00,642.50 532.00,641.00 537.00,640.00 540.00,638.50 545.00,637.50 550.00,637.00 555.00,638.50 560.00,639.00 565.00,638.50 570.00,637.50 577.00,636.50 585.00,635.00 592.00,634.00 597.00,631.50 603.00,629.50 608.00,626.50 613.00,623.50 620.00,620.00 625.00,615.00 630.00,610.00 635.00,605.00 640.00,600.00 650.00,600.00 655.00,599.00 662.00,598.00 667.00,594.50 672.00,590.00 677.00,587.00 682.00,584.50 690.00,583.50 695.00,582.00 700.00,581.00 705.00,581.50 710.00,583.50 717.00,586.00 722.00,589.50 727.00,593.00 733.00,596.00 740.00,599.00 745.00,602.00 752.00,605.00 760.00,608.00 767.00,611.00 775.00,612.50 782.00,613.50 790.00,614.50 797.00,616.00 805.00,617.00 813.00,618.00 820.00,619.50 828.00,620.00 847.00,620.00 850.00,621.00 895.00,621.00 900.00,621.50 932.00,621.50 934.00,620.50 937.00,621.50 943.00,621.50 946.00,621.00 960.00,621.00 963.00,622.00 967.00,622.00 970.00,622.50 990.00,622.50 993.00,622.00 1003.00,622.00 1006.00,621.00 1010.00,621.00 1013.00,620.00 1033.00,620.00 1036.00,621.00 1108.00,621.00 1111.00,622.00 1120.00,622.00 1123.00,623.00 1132.00,623.00 1135.00,624.50 1145.00,624.50 1148.00,626.00 1160.00,626.00 1163.00,627.00 1170.00,627.00 1173.00,628.00 1180.00,628.00 1183.00,629.00 1200.00,629.00" fill="none" stroke="#ff0000" stroke-width="2" />
<polyline points="114.00,754.90 118.75,778.50 122.00,754.90 125.00,778.50 137.00,778.50 140.00,754.90 152.50,754.90 155.75,778.50 159.25,754.90 163.25,754.90 167.50,778.50 171.25,754.90 182.50,754.90 186.25,778.50 197.50,778.50 201.25,754.90 205.00,778.50 209.25,754.90 212.50,778.50 216.25,754.90 220.00,731.30 224.25,754.90 228.00,754.90 231.25,731.30 235.00,731.30 239.25,754.90 250.50,754.90 254.25,778.50 281.25,778.50 284.50,754.90 303.75,754.90 307.50,778.50 311.25,754.90 315.00,778.50 318.75,778.50 322.50,754.90 326.25,731.30 337.50,731.30 341.25,707.70 345.00,731.30 368.25,731.30 371.75,754.90 398.75,754.90 402.50,778.50 405.75,754.90 422.00,754.90 425.00,778.50 428.25,754.90 432.50,778.50 436.25,754.90 447.00,754.90 451.25,731.30 458.25,731.30 462.50,754.90 470.00,754.90 473.75,731.30 477.50,731.30 481.25,754.90 485.50,778.50 489.50,754.90 496.25,754.90 500.00,731.30 505.00,731.30 508.00,684.10 511.75,754.90 515.00,731.30 519.25,754.90 523.25,707.70 538.25,707.70 542.50,684.10 553.75,684.10 557.00,707.70 561.25,684.10 564.50,684.10 568.25,707.70 572.00,731.30 575.75,707.70 580.00,731.30 602.50,731.30 606.25,684.10 610.50,731.30 614.50,707.70 621.25,707.70 625.00,684.10 628.75,684.10 631.25,707.70 633.25,731.30 636.25,636.90 640.00,684.10 643.75,684.10 648.00,660.50 655.00,660.50 659.25,684.10 663.00,684.10 667.50,731.30 670.50,684.10 674.25,660.50 678.25,660.50 682.00,636.90 685.50,660.50 689.25,636.90 693.25,636.90 697.00,660.50 700.75,660.50 704.25,684.10 708.00,660.50 712.00,684.10 716.25,636.90 720.00,636.90 723.75,660.50 727.50,684.10 731.25,660.50 735.00,684.10 754.50,684.10 757.50,707.70 761.25,707.70 765.00,731.30 773.75,731.30 776.25,707.70 780.75,754.90 784.50,731.30 788.25,731.30 791.50,754.90 795.50,731.30 799.50,731.30 803.25,754.90 814.50,754.90 818.25,731.30 822.50,731.30 826.25,754.90 833.25,754.90 837.00,731.30 840.75,754.90 860.50,754.90 863.75,731.30 867.00,707.70 871.25,731.30 875.00,731.30 879.25,707.70 882.00,707.70 886.25,731.30 890.00,707.70 895.00,754.90 901.25,754.90 905.00,778.50 909.50,707.70 913.25,707.70 916.25,731.30 920.00,707.70 924.25,731.30 935.00,731.30 939.25,707.70 950.00,707.70 954.25,731.30 958.25,731.30 962.50,684.10 965.75,660.50 969.25,684.10 988.25,684.10 992.00,660.50 1003.25,660.50 1007.00,684.10 1011.25,684.10 1015.00,636.90 1018.75,672.30 1023.00,707.70 1030.00,707.70 1033.75,684.10 1037.50,707.70 1041.25,684.10 1045.00,707.70 1053.00,707.70 1057.50,731.30 1065.00,731.30 1068.25,707.70 1072.50,731.30 1079.50,731.30 1083.25,754.90 1087.00,731.30 1090.00,731.30 1095.00,754.90 1098.75,754.90 1102.50,731.30 1106.25,731.30 1109.50,707.70 1113.75,754.90 1121.25,754.90 1125.00,731.30 1128.75,754.90 1136.25,707.70 1140.00,707.70 1143.75,731.30 1147.50,731.30 1151.25,707.70 1159.50,707.70 1166.25,660.50 1178.75,754.90 1182.00,754.90 1185.00,731.30 1189.50,754.90 1193.25,731.30 1196.75,754.90 1200.50,731.30" fill="none" stroke="#0000ff" stroke-width="2" clip-path="url(#plotclip)"/>
<polyline points="115.00,779.50 138.00,779.50 142.00,777.30 150.00,776.30 160.00,776.80 170.00,775.80 180.00,776.80 190.00,776.30 200.00,776.80 210.00,776.80 215.00,776.30 220.00,774.80 228.00,773.00 235.00,769.00 240.00,772.00 245.00,771.50 250.00,770.50 255.00,773.00 262.00,775.80 270.00,777.80 280.00,777.80 285.00,775.80 290.00,772.50 297.00,772.00 305.00,773.50 312.00,775.80 320.00,775.30 325.00,772.00 330.00,769.00 335.00,766.00 340.00,761.00 345.00,757.50 350.00,757.50 357.00,757.50 362.00,760.00 367.00,763.00 372.00,764.50 378.00,767.00 385.00,769.00 392.00,770.00 398.00,770.00 402.00,772.00 410.00,773.00 418.00,773.50 425.00,775.30 430.00,775.80 445.00,776.30 450.00,771.50 455.00,768.50 462.00,768.00 470.00,766.50 475.00,765.00 480.00,768.00 485.00,771.00 490.00,772.00 495.00,771.00 500.00,765.00 504.00,763.50 508.00,761.00 512.00,764.50 516.00,766.00 520.00,765.00 525.00,753.00 530.00,745.00 534.00,748.00 538.00,743.00 543.00,736.00 547.00,735.00 551.00,732.50 555.00,733.00 559.00,731.50 565.00,731.00 570.00,733.00 574.00,738.00 578.00,741.00 583.00,745.00 588.00,749.00 593.00,752.00 598.00,753.50 603.00,752.00 608.00,749.00 613.00,748.00 618.00,746.00 621.00,742.00 624.00,745.00 628.00,742.50 632.00,743.50 636.00,741.00 640.00,742.00 644.00,737.00 648.00,730.00 652.00,724.50 656.00,726.00 660.00,729.00 664.00,731.00 668.00,737.00 672.00,732.00 676.00,727.00 680.00,723.00 685.00,718.00 690.00,713.00 695.00,713.50 699.00,712.50 702.00,712.00 705.00,720.00 710.00,720.50 714.00,718.00 717.00,715.50 720.00,717.00 723.00,713.00 727.00,717.50 731.00,723.00 735.00,726.50 740.00,728.50 745.00,735.00 750.00,737.00 754.00,735.00 758.00,739.00 762.00,739.50 766.00,744.00 770.00,748.00 775.00,752.50 780.00,756.00 785.00,759.00 790.00,761.00 795.00,760.00 798.00,758.50 802.00,762.50 806.00,761.00 810.00,763.00 815.00,765.00 820.00,763.50 823.00,762.50 827.00,766.50 832.00,769.50 838.00,769.00 843.00,768.00 847.00,767.00 852.00,770.00 858.00,771.00 862.00,766.50 867.00,761.50 871.00,764.50 875.00,762.50 879.00,756.00 883.00,752.50 887.00,752.50 891.00,756.00 895.00,761.00 900.00,764.00 905.00,765.50 909.00,760.00 914.00,756.00 919.00,752.00 924.00,748.50 929.00,747.00 933.00,746.00 937.00,743.50 941.00,747.00 945.00,744.00 950.00,744.50 954.00,746.00 958.00,748.50 963.00,744.00 968.00,738.00 972.00,732.00 976.00,725.00 980.00,719.00 984.00,714.00 988.00,710.00 992.00,706.50 996.00,703.00 1000.00,701.00 1004.00,702.50 1008.00,704.50 1012.00,703.00 1015.00,698.50 1019.00,705.00 1022.00,712.00 1027.00,714.50 1031.00,716.50 1035.00,716.50 1039.00,719.00 1043.00,721.50 1047.00,725.00 1050.00,727.50 1055.00,732.00 1059.00,735.50 1062.50,737.50 1066.00,737.50 1070.00,741.00 1075.00,745.00 1080.00,749.50 1085.00,752.50 1089.00,755.00 1092.50,760.00 1096.00,763.00 1100.00,762.50 1104.00,759.00 1107.50,756.00 1110.00,757.00 1114.00,762.50 1117.50,763.00 1121.00,764.00 1125.00,763.00 1129.00,766.00 1132.50,763.50 1136.00,759.50 1140.00,757.00 1144.00,757.50 1147.50,758.00 1151.00,752.50 1155.00,748.00 1159.00,745.00 1161.00,739.00 1164.00,734.00 1166.00,731.50 1170.00,731.50 1172.50,737.00 1175.00,743.00 1179.00,749.00 1182.50,751.00 1185.00,754.00 1189.00,757.00 1192.50,758.00 1196.00,761.50 1200.00,759.00" fill="none" stroke="#fafafa" stroke-width="3" clip-path="url(#plotclip)"/>
<rect x="458" y="774" width="2" height="13" fill="#7a7a7a"/>
<rect x="892" y="774" width="2" height="13" fill="#7a7a7a"/>
<rect x="116" y="777" width="1085" height="1" fill="#000000"/>
</g>
<text x="101.55" y="797.00" fill="#ffffff" font-size="12.5" textLength="26.50" lengthAdjust="spacingAndGlyphs">00:00</text>
<text x="146.55" y="797.00" fill="#ffffff" font-size="12.5" textLength="26.50" lengthAdjust="spacingAndGlyphs">01:00</text>
<text x="192.55" y="797.00" fill="#ffffff" font-size="12.5" textLength="26.50" lengthAdjust="spacingAndGlyphs">02:00</text>
<text x="237.55" y="797.00" fill="#ffffff" font-size="12.5" textLength="26.50" lengthAdjust="spacingAndGlyphs">03:00</text>
<text x="283.55" y="797.00" fill="#ffffff" font-size="12.5" textLength="26.50" lengthAdjust="spacingAndGlyphs">04:00</text>
<text x="328.55" y="797.00" fill="#ffffff" font-size="12.5" textLength="26.50" lengthAdjust="spacingAndGlyphs">05:00</text>
<text x="373.55" y="797.00" fill="#ffffff" font-size="12.5" textLength="26.50" lengthAdjust="spacingAndGlyphs">06:00</text>
<text x="419.55" y="797.00" fill="#ffffff" font-size="12.5" textLength="26.50" lengthAdjust="spacingAndGlyphs">07:00</text>
<text x="464.55" y="797.00" fill="#ffffff" font-size="12.5" textLength="26.50" lengthAdjust="spacingAndGlyphs">08:00</text>
<text x="510.55" y="797.00" fill="#ffffff" font-size="12.5" textLength="26.50" lengthAdjust="spacingAndGlyphs">09:00</text>
<text x="555.55" y="797.00" fill="#ffffff" font-size="12.5" textLength="26.50" lengthAdjust="spacingAndGlyphs">10:00</text>
<text x="601.55" y="797.00" fill="#ffffff" font-size="12.5" textLength="26.50" lengthAdjust="spacingAndGlyphs">11:00</text>
<text x="646.55" y="797.00" fill="#ffffff" font-size="12.5" textLength="26.50" lengthAdjust="spacingAndGlyphs">12:00</text>
<text x="691.55" y="797.00" fill="#ffffff" font-size="12.5" textLength="26.50" lengthAdjust="spacingAndGlyphs">13:00</text>
<text x="737.55" y="797.00" fill="#ffffff" font-size="12.5" textLength="26.50" lengthAdjust="spacingAndGlyphs">14:00</text>
<text x="782.55" y="797.00" fill="#ffffff" font-size="12.5" textLength="26.50" lengthAdjust="spacingAndGlyphs">15:00</text>
<text x="828.55" y="797.00" fill="#ffffff" font-size="12.5" textLength="26.50" lengthAdjust="spacingAndGlyphs">16:00</text>
<text x="873.55" y="797.00" fill="#ffffff" font-size="12.5" textLength="26.50" lengthAdjust="spacingAndGlyphs">17:00</text>
<text x="919.55" y="797.00" fill="#ffffff" font-size="12.5" textLength="26.50" lengthAdjust="spacingAndGlyphs">18:00</text>
<text x="964.55" y="797.00" fill="#ffffff" font-size="12.5" textLength="26.50" lengthAdjust="spacingAndGlyphs">19:00</text>
<text x="1009.55" y="797.00" fill="#ffffff" font-size="12.5" textLength="26.50" lengthAdjust="spacingAndGlyphs">20:00</text>
<text x="1055.55" y="797.00" fill="#ffffff" font-size="12.5" textLength="26.50" lengthAdjust="spacingAndGlyphs">21:00</text>
<text x="1100.55" y="797.00" fill="#ffffff" font-size="12.5" textLength="26.50" lengthAdjust="spacingAndGlyphs">22:00</text>
<text x="1146.55" y="797.00" fill="#ffffff" font-size="12.5" textLength="26.50" lengthAdjust="spacingAndGlyphs">23:00</text>
<text x="1191.55" y="797.00" fill="#ffffff" font-size="12.5" textLength="26.50" lengthAdjust="spacingAndGlyphs">24:00</text>
<text x="466.00" y="808.00" fill="#ffffff" font-size="12.5" textLength="26.20" lengthAdjust="spacingAndGlyphs">07:36</text>
<text x="900.00" y="808.00" fill="#ffffff" font-size="12.5" textLength="26.00" lengthAdjust="spacingAndGlyphs">17:09</text>
<path d="M457.5 798 l1.5 2 l2 -1 l-0.5 2.5 l1 1.5 l-1.5 1.5 l-1 3 l-2 0 l-1 -3 l-2 -1.5 l1.5 -1.5 l-0.5 -2.5 l1.5 1 z" fill="#ffee00" stroke="#3a3a8a" stroke-width="0.4"/>
<path d="M458.5 808 q3 -4.5 6.5 0 z" fill="#ffffff"/>
<g shape-rendering="crispEdges"><rect x="888" y="798" width="6" height="6" fill="#f8f8f8"/><rect x="888" y="798" width="1" height="1" fill="#4858b0"/><rect x="893" y="798" width="1" height="1" fill="#4858b0"/><rect x="888" y="803" width="1" height="1" fill="#4858b0"/></g>
<path d="M892 808 l3.3 -7.5 l3.2 7.5 z" fill="#ffee00" stroke="#404040" stroke-width="0.5"/>
<g shape-rendering="crispEdges">
<rect x="0" y="808" width="1280" height="73" fill="#ccfbf6"/>
<rect x="0" y="808" width="1280" height="1" fill="#ffffff"/>
<rect x="0" y="808" width="1" height="73" fill="#ffffff"/>
<rect x="1279" y="808" width="1" height="73" fill="#686868"/>
<rect x="87" y="809" width="1" height="72" fill="#f4ffff"/>
<rect x="88" y="809" width="1" height="72" fill="#6e6e6e"/>
<rect x="204" y="809" width="1" height="72" fill="#f4ffff"/>
<rect x="205" y="809" width="1" height="72" fill="#6e6e6e"/>
<rect x="322" y="809" width="1" height="72" fill="#f4ffff"/>
<rect x="323" y="809" width="1" height="72" fill="#6e6e6e"/>
<rect x="440" y="809" width="1" height="72" fill="#f4ffff"/>
<rect x="441" y="809" width="1" height="72" fill="#6e6e6e"/>
<rect x="558" y="809" width="1" height="72" fill="#f4ffff"/>
<rect x="559" y="809" width="1" height="72" fill="#6e6e6e"/>
<rect x="676" y="809" width="1" height="72" fill="#f4ffff"/>
<rect x="677" y="809" width="1" height="72" fill="#6e6e6e"/>
<rect x="794" y="809" width="1" height="72" fill="#f4ffff"/>
<rect x="795" y="809" width="1" height="72" fill="#6e6e6e"/>
<rect x="912" y="809" width="1" height="72" fill="#f4ffff"/>
<rect x="913" y="809" width="1" height="72" fill="#6e6e6e"/>
</g>
<text x="8.50" y="827.00" fill="#000000" font-size="12.5" font-weight="bold" textLength="38.80" lengthAdjust="spacingAndGlyphs">Sensor</text>
<text x="8.50" y="843.00" fill="#000000" font-size="12.5" font-weight="bold" textLength="46.50" lengthAdjust="spacingAndGlyphs">MinWert</text>
<text x="8.50" y="859.00" fill="#000000" font-size="12.5" font-weight="bold" textLength="49.40" lengthAdjust="spacingAndGlyphs">MaxWert</text>
<text x="8.50" y="875.00" fill="#000000" font-size="12.5" font-weight="bold" textLength="71.20" lengthAdjust="spacingAndGlyphs">Durchschnitt</text>
<text x="95.00" y="827.00" fill="#000000" font-size="12.5" font-weight="bold" textLength="49.80" lengthAdjust="spacingAndGlyphs">Temp. A.</text>
<text x="186.40" y="827.00" fill="#000000" font-size="12.5" font-weight="bold" textLength="12.00" lengthAdjust="spacingAndGlyphs">°C</text>
<text x="100.60" y="843.00" fill="#000000" font-size="12.5" textLength="26.80" lengthAdjust="spacingAndGlyphs">05:50</text>
<text x="183.63" y="843.00" fill="#000000" font-size="12.5" textLength="14.77" lengthAdjust="spacingAndGlyphs">4.7</text>
<text x="100.60" y="859.00" fill="#000000" font-size="12.5" textLength="26.80" lengthAdjust="spacingAndGlyphs">12:20</text>
<text x="183.63" y="859.00" fill="#000000" font-size="12.5" textLength="14.77" lengthAdjust="spacingAndGlyphs">7.1</text>
<text x="177.72" y="875.00" fill="#000000" font-size="12.5" textLength="20.68" lengthAdjust="spacingAndGlyphs">5.39</text>
<text x="213.30" y="827.00" fill="#000000" font-size="12.5" font-weight="bold" textLength="44.30" lengthAdjust="spacingAndGlyphs">Temp. I.</text>
<text x="304.60" y="827.00" fill="#000000" font-size="12.5" font-weight="bold" textLength="12.00" lengthAdjust="spacingAndGlyphs">°C</text>
<text x="218.60" y="843.00" fill="#000000" font-size="12.5" textLength="26.80" lengthAdjust="spacingAndGlyphs">02:25</text>
<text x="295.92" y="843.00" fill="#000000" font-size="12.5" textLength="20.68" lengthAdjust="spacingAndGlyphs">23.7</text>
<text x="218.60" y="859.00" fill="#000000" font-size="12.5" textLength="26.80" lengthAdjust="spacingAndGlyphs">20:55</text>
<text x="295.92" y="859.00" fill="#000000" font-size="12.5" textLength="20.68" lengthAdjust="spacingAndGlyphs">25.2</text>
<text x="290.01" y="875.00" fill="#000000" font-size="12.5" textLength="26.59" lengthAdjust="spacingAndGlyphs">24.05</text>
<text x="684.60" y="827.00" fill="#000000" font-size="12.5" font-weight="bold" textLength="53.20" lengthAdjust="spacingAndGlyphs">Luftdruck</text>
<text x="766.90" y="827.00" fill="#000000" font-size="12.5" font-weight="bold" textLength="21.40" lengthAdjust="spacingAndGlyphs">hPa</text>
<text x="690.60" y="843.00" fill="#000000" font-size="12.5" textLength="26.50" lengthAdjust="spacingAndGlyphs">23:50</text>
<text x="755.60" y="843.00" fill="#000000" font-size="12.5" textLength="32.70" lengthAdjust="spacingAndGlyphs">1015.8</text>
<text x="690.60" y="859.00" fill="#000000" font-size="12.5" textLength="26.50" lengthAdjust="spacingAndGlyphs">00:00</text>
<text x="755.60" y="859.00" fill="#000000" font-size="12.5" textLength="32.70" lengthAdjust="spacingAndGlyphs">1023.4</text>
<text x="684.60" y="875.00" fill="#000000" font-size="12.5" textLength="50.50" lengthAdjust="spacingAndGlyphs">^0.9hPa/h</text>
<text x="755.60" y="875.00" fill="#000000" font-size="12.5" textLength="32.70" lengthAdjust="spacingAndGlyphs">1019.1</text>
<text x="803.10" y="827.00" fill="#000000" font-size="12.5" font-weight="bold" textLength="35.90" lengthAdjust="spacingAndGlyphs">Regen</text>
<text x="884.30" y="827.00" fill="#000000" font-size="12.5" font-weight="bold" textLength="21.30" lengthAdjust="spacingAndGlyphs">l/m²</text>
<text x="809.00" y="859.00" fill="#000000" font-size="12.5" textLength="26.30" lengthAdjust="spacingAndGlyphs">00:00</text>
<text x="892.20" y="859.00" fill="#000000" font-size="12.5" textLength="13.50" lengthAdjust="spacingAndGlyphs">0.0</text>
<text x="803.10" y="875.00" fill="#000000" font-size="12.5" textLength="37.10" lengthAdjust="spacingAndGlyphs">Gesamt:</text>
<text x="892.20" y="875.00" fill="#000000" font-size="12.5" textLength="13.50" lengthAdjust="spacingAndGlyphs">0.0</text>
<text x="920.70" y="827.00" fill="#000000" font-size="12.5" font-weight="bold" textLength="28.20" lengthAdjust="spacingAndGlyphs">Wind</text>
<text x="993.10" y="827.00" fill="#000000" font-size="12.5" font-weight="bold" textLength="28.20" lengthAdjust="spacingAndGlyphs">km/h</text>
<text x="920.70" y="843.00" fill="#000000" font-size="12.5" textLength="43.60" lengthAdjust="spacingAndGlyphs">Ø 10 min.</text>
<text x="1006.80" y="843.00" fill="#000000" font-size="12.5" textLength="14.50" lengthAdjust="spacingAndGlyphs">1.0</text>
<text x="926.60" y="859.00" fill="#000000" font-size="12.5" textLength="26.40" lengthAdjust="spacingAndGlyphs">19:50</text>
<text x="997.00" y="859.00" fill="#000000" font-size="12.5" textLength="24.30" lengthAdjust="spacingAndGlyphs">N 6.6</text>
<text x="1006.80" y="875.00" fill="#000000" font-size="12.5" textLength="14.50" lengthAdjust="spacingAndGlyphs">1.7</text>
<defs><linearGradient id="tb" x1="0" y1="0" x2="1" y2="0"><stop offset="0" stop-color="#0a246a"/><stop offset="1" stop-color="#a6caf0"/></linearGradient>
<linearGradient id="tvf" x1="0" y1="0" x2="1" y2="1"><stop offset="0" stop-color="#1ea0f8"/><stop offset="0.5" stop-color="#0c86f0"/><stop offset="1" stop-color="#0a6ce6"/></linearGradient>
<linearGradient id="tvc" x1="0" y1="0" x2="0" y2="1"><stop offset="0" stop-color="#f4f4f6"/><stop offset="0.55" stop-color="#e8e8ec"/><stop offset="1" stop-color="#d4d4da"/></linearGradient>
<radialGradient id="tvs" cx="0.5" cy="0.5" r="0.5"><stop offset="0" stop-color="#9a9a9a" stop-opacity="0.75"/><stop offset="1" stop-color="#c8c8c8" stop-opacity="0"/></radialGradient></defs>
<g shape-rendering="crispEdges">
<rect x="394" y="341" width="491" height="165" fill="#404040"/>
<rect x="394" y="341" width="490" height="164" fill="#d4d0c8"/>
<rect x="395" y="342" width="489" height="163" fill="#808080"/>
<rect x="395" y="342" width="488" height="162" fill="#ffffff"/>
<rect x="396" y="343" width="487" height="161" fill="#d9d5cd"/>
<rect x="396" y="343" width="486" height="160" fill="#e8e6e1"/>
<rect x="397" y="344" width="485" height="159" fill="#f5f5f5"/>
<rect x="397" y="344" width="485" height="18" fill="url(#tb)"/>
<rect x="407" y="459" width="466" height="3" fill="#e3e3e3"/>
<rect x="578" y="470" width="95" height="23" fill="#404040"/>
<rect x="578" y="470" width="94" height="22" fill="#ffffff"/>
<rect x="579" y="471" width="93" height="21" fill="#808080"/>
<rect x="579" y="471" width="92" height="20" fill="#e6e3de"/>
<rect x="580" y="472" width="91" height="19" fill="#d4d0c8"/>
<rect x="678" y="470" width="95" height="23" fill="#404040"/>
<rect x="678" y="470" width="94" height="22" fill="#ffffff"/>
<rect x="679" y="471" width="93" height="21" fill="#808080"/>
<rect x="679" y="471" width="92" height="20" fill="#e6e3de"/>
<rect x="680" y="472" width="91" height="19" fill="#d4d0c8"/>
<rect x="778" y="470" width="95" height="23" fill="#000000"/>
<rect x="779" y="471" width="93" height="21" fill="#404040"/>
<rect x="779" y="471" width="92" height="20" fill="#ffffff"/>
<rect x="780" y="472" width="91" height="19" fill="#808080"/>
<rect x="780" y="472" width="90" height="18" fill="#e6e3de"/>
<rect x="781" y="473" width="89" height="17" fill="#d4d0c8"/>
</g>
<text x="399.00" y="357.00" fill="#ffffff" font-size="11.5" font-weight="bold" textLength="138.50" lengthAdjust="spacingAndGlyphs">Gesponserte Verbindung</text>
<text x="477.50" y="385.00" fill="#000000" font-size="11" textLength="347.10" lengthAdjust="spacingAndGlyphs">Dies war eine kostenlose Sitzung gesponsert von www.teamviewer.com.</text>
<text x="477.50" y="398.00" fill="#000000" font-size="11" textLength="355.90" lengthAdjust="spacingAndGlyphs">TeamViewer-Sitzungen sind für den privaten Gebrauch komplett kostenlos.</text>
<text x="477.50" y="424.00" fill="#000000" font-size="11" textLength="171.30" lengthAdjust="spacingAndGlyphs">Wir bedanken uns für Ihre Fairness.</text>
<text x="598.80" y="485.00" fill="#000000" font-size="11" textLength="51.20" lengthAdjust="spacingAndGlyphs">Gefällt mir!</text>
<text x="692.50" y="485.00" fill="#000000" font-size="11" textLength="64.50" lengthAdjust="spacingAndGlyphs">Lizenz kaufen</text>
<text x="817.50" y="485.00" fill="#000000" font-size="11" textLength="13.80" lengthAdjust="spacingAndGlyphs">OK</text>
<filter id="blur1" x="-50%" y="-50%" width="200%" height="200%"><feGaussianBlur stdDeviation="1.6"/></filter>
<path d="M449 412.5 L461.5 415.5 L458.5 420.5 L449 423 Z" fill="#8c8c8c" opacity="0.45" filter="url(#blur1)"/>
<path d="M409 374.3 L446 378.7 Q449.9 379.2 449.8 382.5 L449 425 Q448.9 428.1 446 427.3 L411 418.7 Q408 417.9 407.8 415 L405.8 378 Q405.6 374 409 374.3 Z" fill="#0a46d6"/>
<path d="M444.2 378.4 L447.2 378.9 Q449.9 379.3 449.8 382.3 L446 381.6 Z" fill="#1fd6ff"/>
<path d="M409 374.3 L442.6 378.3 Q446 378.8 445.9 381.8 L445 423.6 Q444.9 427 441.8 426.3 L411 418.7 Q408 417.9 407.8 415 L405.8 378 Q405.6 374 409 374.3 Z" fill="url(#tvf)"/>
<path d="M409 374.3 L442.6 378.3 Q446 378.8 445.9 381.8 L445.5 400 Q425 392 407.2 403 L405.8 378 Q405.6 374 409 374.3 Z" fill="#3cb4ff" opacity="0.28"/>
<ellipse cx="425.3" cy="400.4" rx="16.2" ry="19.3" fill="#0a5ccc" opacity="0.8" transform="rotate(-8 425.3 400.4)"/>
<ellipse cx="426" cy="400" rx="15" ry="18.3" fill="url(#tvc)" transform="rotate(-8 426 400)"/>
<linearGradient id="tva" x1="0" y1="0" x2="0" y2="1"><stop offset="0" stop-color="#2a9cf6"/><stop offset="1" stop-color="#0a6ce0"/></linearGradient>
<path d="M413.2 398.6 L422 394 L421.8 397.3 L430 398.6 L429.6 394.8 L439.8 402.4 L429.4 407.3 L429.7 403.9 L422 402.6 L422.4 405.6 Z" fill="url(#tva)"/>
</svg>
</body></html>
